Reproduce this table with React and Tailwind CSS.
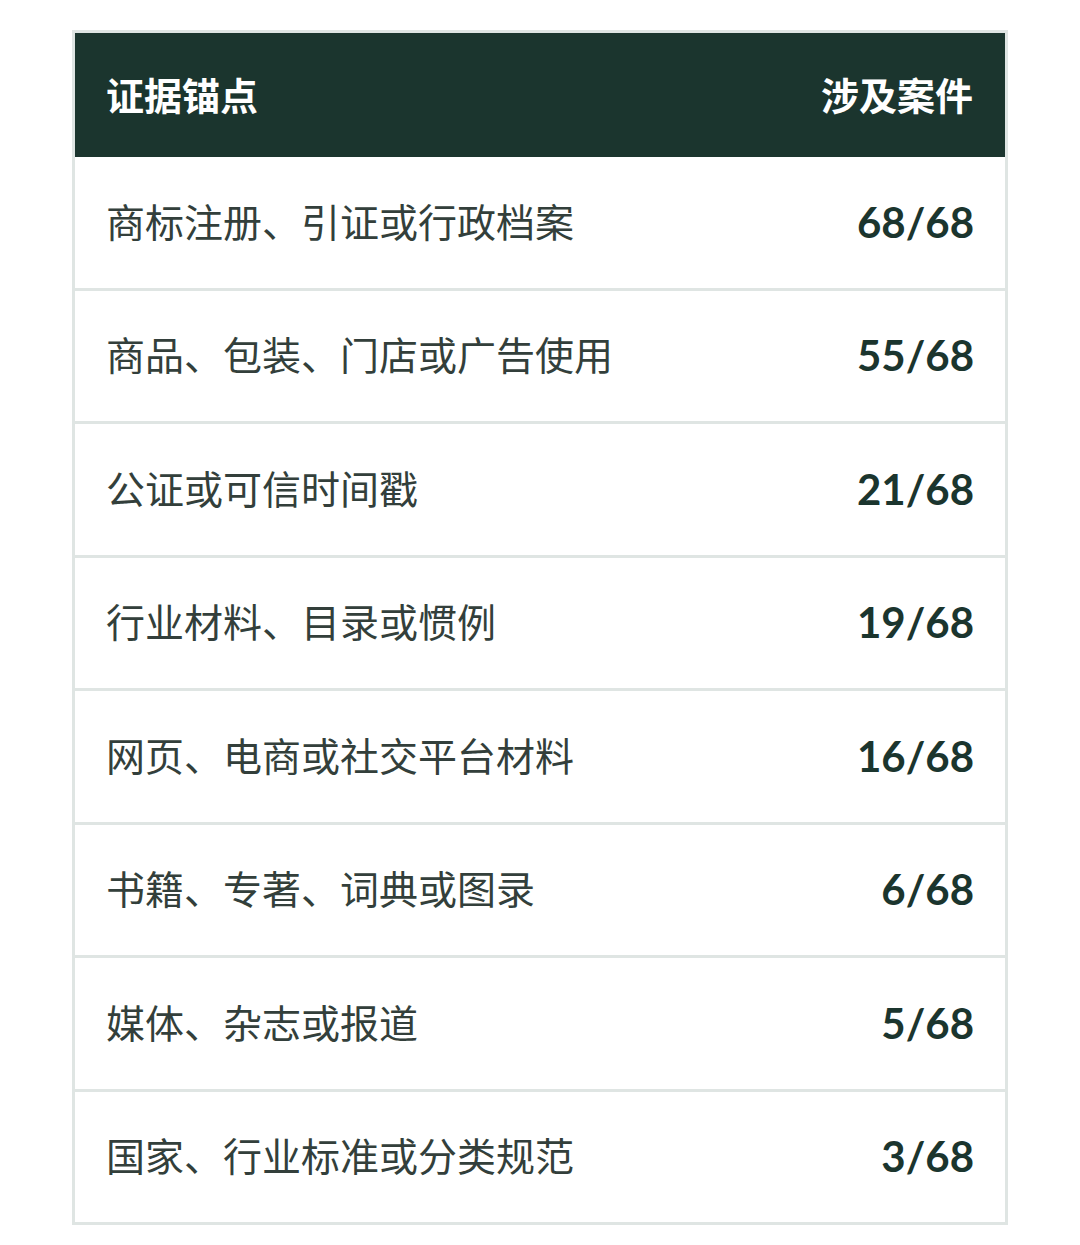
import React from "react";

const rows = [
  ["商标注册、引证或行政档案", "68/68"],
  ["商品、包装、门店或广告使用", "55/68"],
  ["公证或可信时间戳", "21/68"],
  ["行业材料、目录或惯例", "19/68"],
  ["网页、电商或社交平台材料", "16/68"],
  ["书籍、专著、词典或图录", "6/68"],
  ["媒体、杂志或报道", "5/68"],
  ["国家、行业标准或分类规范", "3/68"],
];

export default function App() {
  return (
    <div className="min-h-[1245px] bg-white pt-[30px] pl-[72px]">
      <div
        className="w-[936px] border-[3px] border-[#dfe5e3] flex flex-col"
        style={{ fontFamily: '"Noto Sans CJK SC", "Noto Sans", sans-serif' }}
      >
        <div className="h-[124px] bg-[#1b352e] flex items-center justify-between pl-[31px] pr-[32px] text-white font-bold text-[38px] leading-none">
          <span className="mb-[2px]">证据锚点</span>
          <span className="mb-[2px]">涉及案件</span>
        </div>
        {rows.map(([label, val], i) => (
          <div
            key={i}
            className={
              "flex items-center justify-between pl-[31px] pr-[31px] bg-white " +
              (i < rows.length - 1
                ? "h-[133.5px] border-b-[3px] border-[#dfe5e3]"
                : "h-[130.5px]")
            }
          >
            <span className="mb-[4px] text-[39px] leading-none text-[#333f3b]">{label}</span>
            <span
              className="mb-[1px] text-[42px] leading-none font-bold text-[#1b352e]"
              style={{ fontFamily: 'Lato, "Noto Sans", sans-serif' }}
            >
              {val}
            </span>
          </div>
        ))}
      </div>
    </div>
  );
}
